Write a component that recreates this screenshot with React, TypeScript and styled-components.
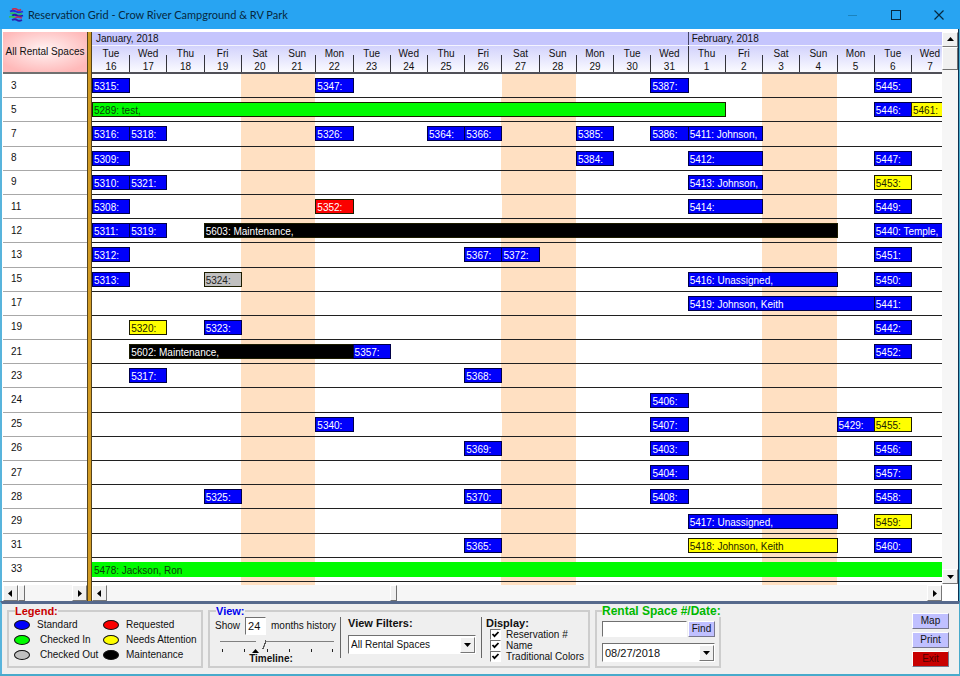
import React from "react";
import styled, { createGlobalStyle } from "styled-components";

const GlobalStyle = createGlobalStyle`
  *, *::before, *::after { box-sizing: border-box; }
  html, body { margin: 0; padding: 0; }
  body, button, input, select {
    font-family: "Liberation Sans", Arial, sans-serif;
    font-size: 10px;
    line-height: 12px;
    color: #111;
  }
`;

type Tone = "standard" | "requested" | "in" | "attention" | "out" | "maintenance";

const TONES: Record<Tone, { fill: string; text: string }> = {
  standard: { fill: "#0000fb", text: "#ffffff" },
  requested: { fill: "#fb0000", text: "#ffffff" },
  in: { fill: "#00fb00", text: "#0a3a0a" },
  attention: { fill: "#ffff00", text: "#222200" },
  out: { fill: "#c0c0c0", text: "#222222" },
  maintenance: { fill: "#000000", text: "#ffffff" },
};

interface Booking {
  label: string;
  day: number;
  span: number;
  tone: Tone;
  open: boolean;
}

interface Space {
  name: string;
  bookings: Booking[];
}

const b = (label: string, day: number, span = 1, tone: Tone = "standard", open = false): Booking => ({
  label,
  day,
  span,
  tone,
  open,
});

const SPACES: Space[] = [
  { name: "3", bookings: [b("5315:", 1), b("5347:", 7), b("5387:", 16), b("5445:", 22)] },
  { name: "5", bookings: [b("5289: test,", 1, 17, "in"), b("5446:", 22), b("5461:", 23, 1, "attention", true)] },
  {
    name: "7",
    bookings: [
      b("5316:", 1), b("5318:", 2), b("5326:", 7), b("5364:", 10), b("5366:", 11),
      b("5385:", 14), b("5386:", 16), b("5411: Johnson,", 17, 2),
    ],
  },
  { name: "8", bookings: [b("5309:", 1), b("5384:", 14), b("5412:", 17, 2), b("5447:", 22)] },
  { name: "9", bookings: [b("5310:", 1), b("5321:", 2), b("5413: Johnson,", 17, 2), b("5453:", 22, 1, "attention")] },
  { name: "11", bookings: [b("5308:", 1), b("5352:", 7, 1, "requested"), b("5414:", 17, 2), b("5449:", 22)] },
  {
    name: "12",
    bookings: [b("5311:", 1), b("5319:", 2), b("5603: Maintenance,", 4, 17, "maintenance"), b("5440: Temple,", 22, 2, "standard", true)],
  },
  { name: "13", bookings: [b("5312:", 1), b("5367:", 11), b("5372:", 12), b("5451:", 22)] },
  { name: "15", bookings: [b("5313:", 1), b("5324:", 4, 1, "out"), b("5416: Unassigned,", 17, 4), b("5450:", 22)] },
  { name: "17", bookings: [b("5419: Johnson, Keith", 17, 5), b("5441:", 22)] },
  { name: "19", bookings: [b("5320:", 2, 1, "attention"), b("5323:", 4), b("5442:", 22)] },
  { name: "21", bookings: [b("5602: Maintenance,", 2, 6, "maintenance"), b("5357:", 8), b("5452:", 22)] },
  { name: "23", bookings: [b("5317:", 2), b("5368:", 11)] },
  { name: "24", bookings: [b("5406:", 16)] },
  { name: "25", bookings: [b("5340:", 7), b("5407:", 16), b("5429:", 21), b("5455:", 22, 1, "attention")] },
  { name: "26", bookings: [b("5369:", 11), b("5403:", 16), b("5456:", 22)] },
  { name: "27", bookings: [b("5404:", 16), b("5457:", 22)] },
  { name: "28", bookings: [b("5325:", 4), b("5370:", 11), b("5408:", 16), b("5458:", 22)] },
  { name: "29", bookings: [b("5417: Unassigned,", 17, 4), b("5459:", 22, 1, "attention")] },
  { name: "31", bookings: [b("5365:", 11), b("5418: Johnson, Keith", 17, 4, "attention"), b("5460:", 22)] },
  { name: "33", bookings: [b("5478: Jackson, Ron", 1, 23, "in", true)] },
];

const WEEK = ["Sun", "Mon", "Tue", "Wed", "Thu", "Fri", "Sat"];
const DAYS = Array.from({ length: 23 }, (_, i) => ({
  weekday: WEEK[(i + 2) % 7],
  date: i < 16 ? i + 16 : i - 15,
}));
const WEEKENDS = [5, 12, 19];

/* ---------- window frame ---------- */

const Window = styled.div`
  display: flex;
  flex-direction: column;
  min-height: 100vh;
  background: #efefef;
  border-bottom: 2px solid #48aacb;
`;

const TitleBar = styled.header`
  display: flex;
  align-items: center;
  height: 29px;
  padding-left: 9px;
  background: #28a4f2;
`;

const Title = styled.h1`
  flex: 1;
  margin: 0 0 0 4px;
  font: 400 11px/16px Lato, "Open Sans", sans-serif;
  color: #06283f;
`;

const CaptionButton = styled.button`
  display: grid;
  place-items: center;
  width: 43px;
  height: 28px;
  padding: 0;
  border: 0;
  background: transparent;
`;

const Body = styled.main`
  display: flex;
  flex: 1;
  padding: 3px 1px 0;
  background: #ffffff;
  border-left: 2px solid #58b4dc;
  border-right: 1px solid #48aacb;
  box-shadow: inset -1px 0 #0c3050;
`;

/* ---------- rental space list ---------- */

const Pane = styled.section<{ $grow?: boolean }>`
  display: flex;
  flex-direction: column;
  min-width: 0;
  flex: ${(p) => (p.$grow ? "1 1 0" : "0 0 84px")};
`;

const Corner = styled.div`
  display: flex;
  align-items: center;
  justify-content: center;
  height: 42px;
  border-bottom: 2px solid #707070;
  background: radial-gradient(ellipse 60% 60% at 50% 45%, #fff4f4 0%, #ffb9b9 100%);
  white-space: nowrap;
`;

const Rows = styled.div`
  display: grid;
  flex: 1;
  grid-auto-rows: minmax(22px, 1fr);
`;

const SpaceName = styled.div`
  display: flex;
  align-items: center;
  padding-left: 8px;
  border-bottom: 1px solid #a8a8a8;
`;

const Splitter = styled.div`
  flex: 0 0 5px;
  background: #d29c26;
  border-left: 1px solid #54431c;
  border-right: 1px solid #54431c;
`;

/* ---------- calendar ---------- */

const dayColumns = "repeat(22, minmax(0, 1fr)) 31px";

const Months = styled.div`
  display: grid;
  grid-template-columns: ${dayColumns};
  height: 14px;
  background: #c5c5fd;
  border-bottom: 1px solid #f4f4ff;
`;

const Month = styled.div<{ $start: number; $span: number }>`
  grid-column: ${(p) => p.$start} / span ${(p) => p.$span};
  padding-left: 3px;
  line-height: 13px;
  border-left: ${(p) => (p.$start > 1 ? "1px solid #444466" : "1px solid #c5c5fd")};
`;

const Days = styled.div`
  display: grid;
  grid-template-columns: ${dayColumns};
  height: 28px;
  overflow: hidden;
  background: linear-gradient(#d2d2fc, #fbfbff);
  border-bottom: 2px solid #505058;
`;

const Day = styled.div<{ $tall?: boolean; $first?: boolean }>`
  background: ${(p) =>
    p.$first ? "none" : `linear-gradient(#33333b, #33333b) left bottom / 1px ${p.$tall ? "100%" : "18px"} no-repeat`};
`;

const DayText = styled.div`
  width: 38px;
  padding-top: 1px;
  text-align: center;
  line-height: 13px;
`;

const Track = styled.div`
  display: grid;
  grid-template-columns: ${dayColumns};
  grid-template-rows: minmax(0, 1fr);
  min-width: 0;
  border-bottom: 1px solid #202020;
`;

const TrackEnd = styled(Track)`
  height: 3px;
  border-bottom: 0;
`;

const Weekend = styled.div<{ $start: number }>`
  grid-row: 1;
  grid-column: ${(p) => p.$start} / span 2;
  background: #ffe0c2;
`;

const Bar = styled.div<{ $day: number; $span: number; $tone: Tone; $open: boolean }>`
  grid-row: 1;
  grid-column: ${(p) => p.$day} / span ${(p) => p.$span};
  align-self: center;
  height: 15px;
  margin-right: ${(p) => (p.$open ? "0" : "-1px")};
  padding: 2px 0 0 1px;
  overflow: hidden;
  border: 1px solid ${(p) => (p.$tone === "standard" ? "#000048" : "#1c1c00")};
  ${(p) => p.$open && "border-right: 0;"}
  ${(p) => p.$span === 23 && "border-color: #00fb00;"}
  background: ${(p) => TONES[p.$tone].fill};
  color: ${(p) => TONES[p.$tone].text};
  white-space: nowrap;
`;

/* ---------- scroll bars ---------- */

const HScroll = styled.div`
  display: flex;
  height: 16px;
  background: #f6f6f6;
`;

const VScroll = styled.div`
  display: flex;
  flex: 0 0 16px;
  flex-direction: column;
  background: #f6f6f6;
`;

const ArrowButton = styled.button`
  display: grid;
  flex: 0 0 15px;
  place-items: center;
  min-width: 15px;
  padding: 0;
  border: 1px solid;
  border-color: #ffffff #777777 #777777 #ffffff;
  background: #f0f0f0;
`;

const Thumb = styled.div<{ $vertical?: boolean }>`
  ${(p) => (p.$vertical ? "height: 23px;" : "width: 7px;")}
  border: 1px solid;
  border-color: #ffffff #707070 #707070 #ffffff;
  background: #f0f0f0;
`;

const Gap = styled.div<{ $grow: number }>`
  flex: ${(p) => p.$grow} 1 0;
`;

const ScrollCorner = styled.div`
  height: 17px;
  background: #ffffff;
`;

/* ---------- control panel ---------- */

const Panel = styled.footer`
  display: flex;
  align-items: stretch;
  gap: 5px;
  padding: 1px 10px 6px 5px;
  border-top: 3px solid #56698c;
  border-left: 2px solid #58b4dc;
  border-right: 1px solid #48aacb;
`;

const Group = styled.fieldset<{ $width: number }>`
  width: ${(p) => p.$width}px;
  min-width: 0;
  height: 63px;
  margin: 0;
  padding: 0 4px 0 5px;
  border: 2px solid #cdcdcd;
`;

const Caption = styled.legend<{ $color: string; $large?: boolean }>`
  margin-left: ${(p) => (p.$large ? "0" : "1px")};
  padding: 0;
  font-size: ${(p) => (p.$large ? "12px" : "11px")};
  font-weight: 700;
  line-height: 12px;
  color: ${(p) => p.$color};
  white-space: nowrap;
`;

const LegendGrid = styled.ul`
  display: grid;
  grid-template-columns: 89px 1fr;
  grid-auto-rows: 15px;
  margin: 0;
  padding: 0;
  list-style: none;
`;

const LegendItem = styled.li<{ $gap: number }>`
  display: flex;
  align-items: center;
  gap: ${(p) => p.$gap}px;
  white-space: nowrap;
`;

const Swatch = styled.span<{ $tone: Tone }>`
  width: 16px;
  height: 10px;
  border: 1px solid #101010;
  border-radius: 50%;
  background: ${(p) => TONES[p.$tone].fill};
`;

const ViewRow = styled.div`
  display: flex;
  align-items: flex-start;
`;

const History = styled.div`
  width: 127px;
`;

const HistoryLine = styled.label`
  display: flex;
  align-items: center;
  gap: 5px;
  white-space: nowrap;
`;

const sunken = `
  border: 1px solid;
  border-color: #707070 #ffffff #ffffff #707070;
  border-radius: 0;
  background: #ffffff;
  outline: 0;
`;

const MonthsInput = styled.input`
  ${sunken}
  width: 21px;
  height: 18px;
  padding: 0 2px;
  font-size: 11px;
`;

const Slider = styled.input`
  display: block;
  appearance: none;
  width: 114px;
  height: 10px;
  margin: 4px 0 0 5px;
  background: linear-gradient(#808080, #808080) left 2px / 100% 1px no-repeat;
  &::-webkit-slider-thumb {
    appearance: none;
    width: 10px;
    height: 10px;
    background: linear-gradient(110deg, #efefef 72%, #555555 73%, #555555 82%, #efefef 83%);
  }
`;

const Ticks = styled.svg`
  display: block;
  width: 114px;
  height: 4px;
  margin-left: 5px;
`;

const Strong = styled.span<{ $small?: boolean }>`
  display: block;
  font-size: ${(p) => (p.$small ? "10px" : "11px")};
  font-weight: 700;
  line-height: 12px;
  white-space: nowrap;
`;

const TimelineLabel = styled.label`
  display: block;
  padding-right: 13px;
  text-align: center;
`;

const Rule = styled.div`
  width: 1px;
  height: 41px;
  background: #666666;
`;

const Filters = styled.label`
  display: block;
  width: 142px;
  padding: 0 5px 0 7px;
`;

const SelectBox = styled.span<{ $top: number }>`
  display: grid;
  grid-template-columns: 1fr 15px;
  align-items: center;
  height: 19px;
  margin-top: ${(p) => p.$top}px;
  ${sunken}
`;

const Select = styled.select<{ $large?: boolean }>`
  grid-row: 1;
  grid-column: 1 / -1;
  width: 100%;
  height: 17px;
  padding: 0 2px;
  border: 0;
  border-radius: 0;
  outline: 0;
  appearance: none;
  background: transparent;
  font-size: ${(p) => (p.$large ? "11px" : "10px")};
`;

const DropMark = styled.span`
  display: grid;
  grid-row: 1;
  grid-column: 2;
  place-items: center;
  height: 16px;
  border: 1px solid;
  border-color: #ffffff #777777 #777777 #ffffff;
  background: #f0f0f0;
  pointer-events: none;
`;

const Display = styled.div`
  padding-left: 4px;
`;

const CheckLine = styled.label`
  display: grid;
  grid-template-columns: 11px auto;
  align-items: center;
  gap: 5px;
  height: 11px;
  padding-left: 4px;
  line-height: 11px;
  white-space: nowrap;
`;

const Check = styled.input`
  appearance: none;
  width: 11px;
  height: 11px;
  margin: 0;
  border: 1px solid;
  border-color: #707070 #ffffff #ffffff #707070;
  background: #ffffff
    url("data:image/svg+xml,%3Csvg xmlns='http://www.w3.org/2000/svg' viewBox='0 0 9 9'%3E%3Cpath d='M1.5 4 L3.5 6.2 L7.5 2' fill='none' stroke='black' stroke-width='1.8'/%3E%3C/svg%3E")
    center / 9px 9px no-repeat;
`;

const FindRow = styled.div`
  display: flex;
  gap: 1px;
  margin-top: 4px;
`;

const FindInput = styled.input`
  ${sunken}
  flex: 1;
  min-width: 0;
  height: 16px;
  padding: 0 2px;
`;

const PushButton = styled.button<{ $width: number; $danger?: boolean }>`
  width: ${(p) => p.$width}px;
  height: 16px;
  padding: 0;
  border: 1px solid;
  border-color: #ffffff #77778c #77778c #ffffff;
  background: ${(p) => (p.$danger ? "#c80000" : "#c0c0ff")};
  color: ${(p) => (p.$danger ? "#500000" : "#111111")};
`;

const Actions = styled.div`
  display: flex;
  flex-direction: column;
  gap: 3px;
  margin-left: auto;
  padding-top: 8px;
`;

/* ---------- pieces ---------- */

const ARROWS = {
  up: "M0 5 L3.5 1 L7 5 Z",
  down: "M0 2 L3.5 6 L7 2 Z",
  left: "M5 0 L1 3.5 L5 7 Z",
  right: "M2 0 L6 3.5 L2 7 Z",
};

const Arrow = ({ to }: { to: keyof typeof ARROWS }) => (
  <svg width="7" height="7" viewBox="0 0 7 7" aria-hidden="true">
    <path d={ARROWS[to]} fill="#000" />
  </svg>
);

const AppIcon = () => (
  <svg width="15" height="14" viewBox="0 0 15 14" aria-hidden="true" fill="none">
    <path d="M3 1.5 Q6 0 8 1.5 T12 1.5" stroke="#d02848" strokeWidth="1.6" />
    <path d="M1 3.5 Q4 2 7 3.5 T14 3.5" stroke="#2a2ad0" strokeWidth="1.8" />
    <path d="M1 5.5 Q4 4.5 7 6 T13 5.5" stroke="#30b860" strokeWidth="1.6" />
    <path d="M3 7.5 Q6 6 8 7.5 T14 7.5" stroke="#2418b0" strokeWidth="1.8" />
    <path d="M0 9 Q3 8 6 9.5" stroke="#38c048" strokeWidth="1.6" />
    <path d="M6 9.5 Q9 8.5 13 10" stroke="#b83068" strokeWidth="1.6" />
    <path d="M3 12 Q6 10.5 8 12 T13 12" stroke="#2a20b0" strokeWidth="1.8" />
  </svg>
);

const Weekends = () => (
  <>
    {WEEKENDS.map((start) => (
      <Weekend key={start} $start={start} />
    ))}
  </>
);

const LEGEND: { label: string; tone: Tone; gap: number }[] = [
  { label: "Standard", tone: "standard", gap: 7 },
  { label: "Requested", tone: "requested", gap: 7 },
  { label: "Checked In", tone: "in", gap: 10 },
  { label: "Needs Attention", tone: "attention", gap: 7 },
  { label: "Checked Out", tone: "out", gap: 10 },
  { label: "Maintenance", tone: "maintenance", gap: 7 },
];

export default function App() {
  return (
    <>
      <GlobalStyle />
      <Window>
        <TitleBar>
          <AppIcon />
          <Title>Reservation Grid - Crow River Campground &amp; RV Park</Title>
          <CaptionButton aria-label="Minimize">
            <svg width="10" height="10" viewBox="0 0 10 10">
              <path d="M0 5.5 H9" stroke="#1b83bd" />
            </svg>
          </CaptionButton>
          <CaptionButton aria-label="Maximize">
            <svg width="10" height="10" viewBox="0 0 10 10">
              <rect x="0.5" y="0.5" width="9" height="9" fill="none" stroke="#06283f" />
            </svg>
          </CaptionButton>
          <CaptionButton aria-label="Close">
            <svg width="10" height="10" viewBox="0 0 10 10">
              <path d="M0.5 0.5 L9.5 9.5 M9.5 0.5 L0.5 9.5" stroke="#06283f" strokeWidth="1.2" />
            </svg>
          </CaptionButton>
        </TitleBar>

        <Body>
          <Pane>
            <Corner>All Rental Spaces</Corner>
            <Rows>
              {SPACES.map((s) => (
                <SpaceName key={s.name}>{s.name}</SpaceName>
              ))}
            </Rows>
            <TrackEnd />
            <HScroll>
              <ArrowButton aria-label="Scroll spaces left"><Arrow to="left" /></ArrowButton>
              <Thumb />
              <Gap $grow={1} />
              <ArrowButton aria-label="Scroll spaces right"><Arrow to="right" /></ArrowButton>
            </HScroll>
          </Pane>
          <Splitter />
          <Pane $grow>
            <Months>
              <Month $start={1} $span={16}>January, 2018</Month>
              <Month $start={17} $span={7}>February, 2018</Month>
            </Months>
            <Days>
              {DAYS.map((d, i) => (
                <Day key={i} $first={i === 0} $tall={i === 16}>
                  <DayText>
                    {d.weekday}
                    <br />
                    {d.date}
                  </DayText>
                </Day>
              ))}
            </Days>
            <Rows>
              {SPACES.map((s) => (
                <Track key={s.name}>
                  <Weekends />
                  {s.bookings.map((k) => (
                    <Bar key={k.label} $day={k.day} $span={k.span} $tone={k.tone} $open={k.open}>
                      {k.label}
                    </Bar>
                  ))}
                </Track>
              ))}
            </Rows>
            <TrackEnd>
              <Weekends />
            </TrackEnd>
            <HScroll>
              <ArrowButton aria-label="Scroll dates left"><Arrow to="left" /></ArrowButton>
              <Gap $grow={283} />
              <Thumb />
              <Gap $grow={530} />
              <ArrowButton aria-label="Scroll dates right"><Arrow to="right" /></ArrowButton>
            </HScroll>
          </Pane>
          <VScroll>
            <ArrowButton aria-label="Scroll up"><Arrow to="up" /></ArrowButton>
            <Thumb $vertical />
            <Gap $grow={1} />
            <ArrowButton aria-label="Scroll down"><Arrow to="down" /></ArrowButton>
            <ScrollCorner />
          </VScroll>
        </Body>

        <Panel>
          <Group $width={196}>
            <Caption $color="#c80000">Legend:</Caption>
            <LegendGrid>
              {LEGEND.map((l) => (
                <LegendItem key={l.label} $gap={l.gap}>
                  <Swatch $tone={l.tone} />
                  {l.label}
                </LegendItem>
              ))}
            </LegendGrid>
          </Group>

          <Group $width={382}>
            <Caption $color="#0000f0">View:</Caption>
            <ViewRow>
              <History>
                <HistoryLine>
                  Show
                  <MonthsInput defaultValue="24" aria-label="Months of history" />
                  months history
                </HistoryLine>
                <Slider id="timeline" type="range" min={0} max={20} defaultValue={7} />
                <Ticks viewBox="0 0 114 4" aria-hidden="true">
                  <path d="M2.5 0 V3 M24.5 0 V3 M47.5 0 V3 M69.5 0 V3 M91.5 0 V3 M112.5 0 V3" stroke="#222" />
                  <path d="M32 4 L35.5 0 L39 4 Z" fill="#000" />
                </Ticks>
                <TimelineLabel htmlFor="timeline">
                  <Strong $small>Timeline:</Strong>
                </TimelineLabel>
              </History>
              <Rule />
              <Filters>
                <Strong>View Filters:</Strong>
                <SelectBox $top={6}>
                  <DropMark><Arrow to="down" /></DropMark>
                  <Select defaultValue="all">
                    <option value="all">All Rental Spaces</option>
                  </Select>
                </SelectBox>
              </Filters>
              <Rule />
              <Display>
                <Strong>Display:</Strong>
                {["Reservation #", "Name", "Traditional Colors"].map((t) => (
                  <CheckLine key={t}>
                    <Check type="checkbox" defaultChecked />
                    {t}
                  </CheckLine>
                ))}
              </Display>
            </ViewRow>
          </Group>

          <Group $width={126}>
            <Caption $color="#00b800" $large>Rental Space #/Date:</Caption>
            <FindRow>
              <FindInput aria-label="Rental space number" />
              <PushButton $width={27}>Find</PushButton>
            </FindRow>
            <SelectBox $top={6}>
              <DropMark><Arrow to="down" /></DropMark>
              <Select $large defaultValue="d" aria-label="Date">
                <option value="d">08/27/2018</option>
              </Select>
            </SelectBox>
          </Group>

          <Actions>
            <PushButton $width={37}>Map</PushButton>
            <PushButton $width={37}>Print</PushButton>
            <PushButton $width={37} $danger>Exit</PushButton>
          </Actions>
        </Panel>
      </Window>
    </>
  );
}
